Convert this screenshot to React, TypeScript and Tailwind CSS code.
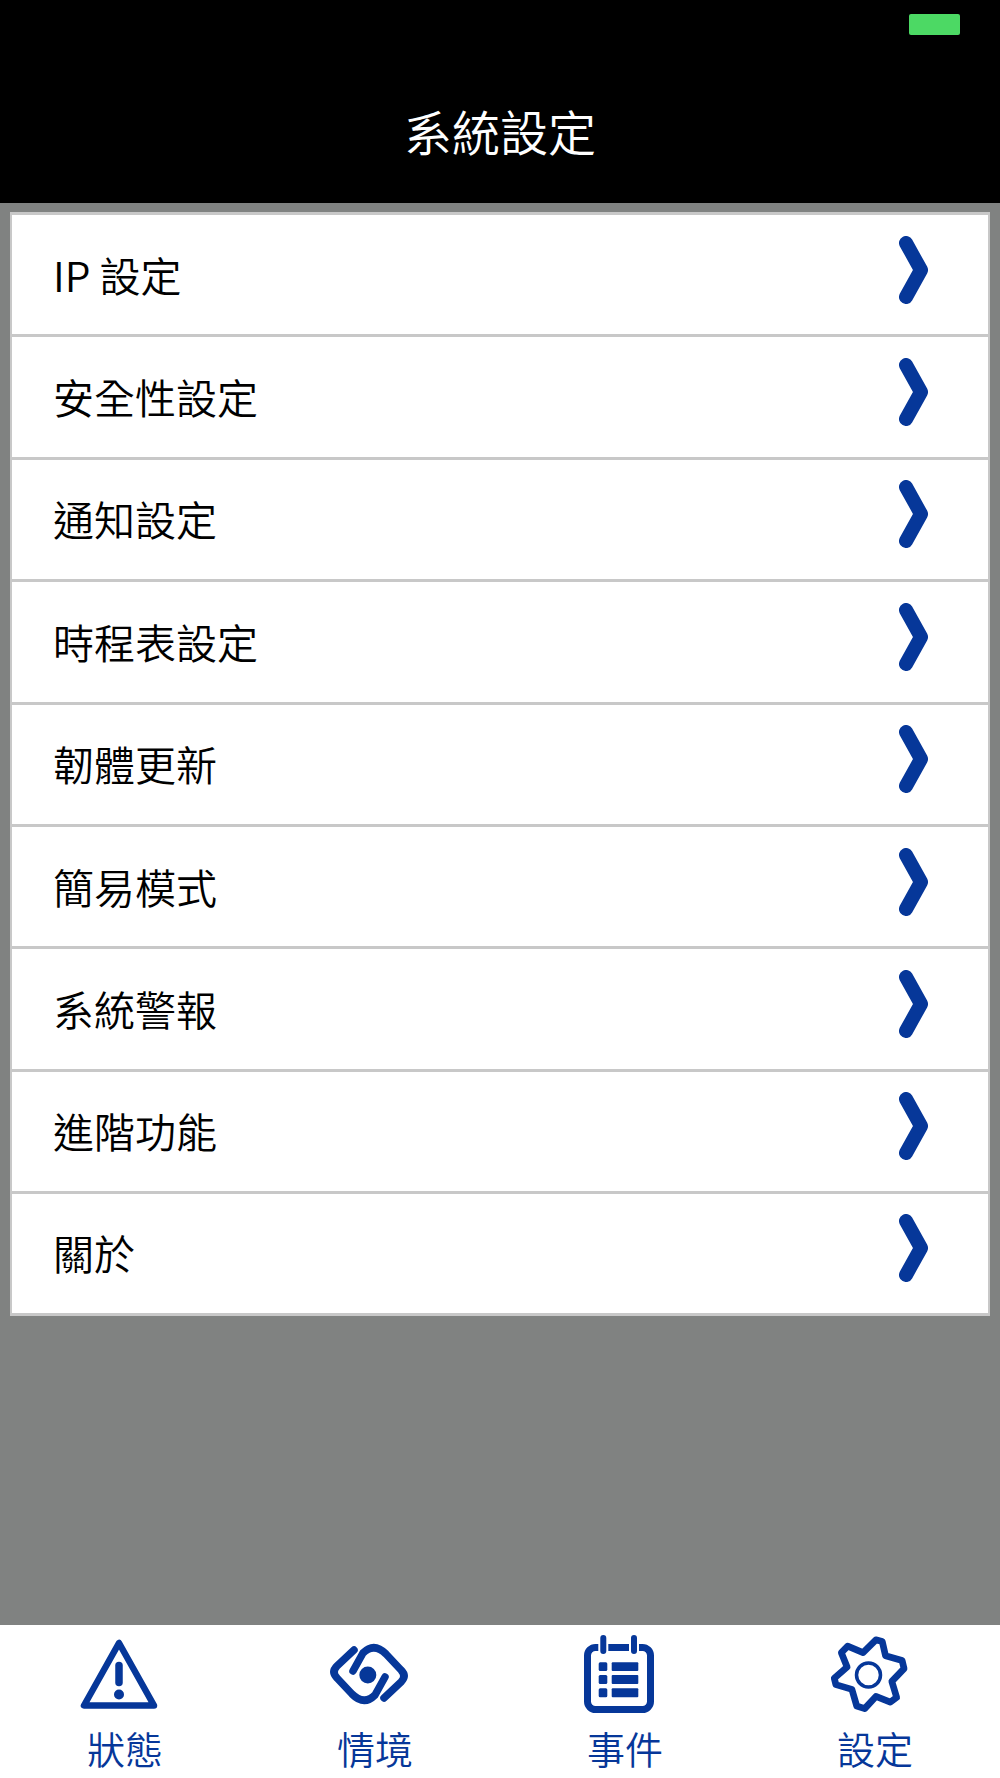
const font = { fontFamily: '"Noto Sans CJK TC", "Noto Sans CJK SC", sans-serif' };

const rows = ["IP 設定", "安全性設定", "通知設定", "時程表設定", "韌體更新", "簡易模式", "系統警報", "進階功能", "關於"];

function Chevron() {
  return (
    <svg viewBox="0 0 30 68" className="w-[30px] h-[68px] mb-[10px] shrink-0" fill="none">
      <path d="M7 7 L22 34 L7 61" stroke="#063799" strokeWidth="14" strokeLinecap="round" strokeLinejoin="round" />
    </svg>
  );
}

function Warning() {
  return (
    <svg viewBox="0 0 90 90" className="w-[90px] h-[90px] mr-3" fill="none">
      <path d="M45 13 L10 75.5 L80 75.5 Z" stroke="#063799" strokeWidth="6.5" strokeLinejoin="round" />
      <path d="M45 35.5 L45 52.5" stroke="#063799" strokeWidth="7.5" strokeLinecap="round" />
      <circle cx="45" cy="64.5" r="5" fill="#063799" />
    </svg>
  );
}

function Scene() {
  return (
    <svg viewBox="0 0 90 90" className="w-[90px] h-[90px] mr-3" fill="none" stroke="#063799" strokeWidth="7.5" strokeLinecap="round">
      <path d="M30 20 L13 36 Q7 42 13 48 L28 64 Q40 76 51 65 L61 47" />
      <path d="M60 68 L77 52 Q83 46 77 40 L62 24 Q50 12 39 23 L29 41" />
      <circle cx="43.8" cy="45" r="8.5" fill="#063799" stroke="none" />
    </svg>
  );
}

function Calendar() {
  return (
    <svg viewBox="0 0 90 90" className="w-[90px] h-[90px] mr-3" fill="none">
      <rect x="13.5" y="17.5" width="63" height="62" rx="8" stroke="#063799" strokeWidth="7" />
      <path d="M29.3 8 L29.3 21 M60 8 L60 21" stroke="#ffffff" strokeWidth="10" />
      <path d="M29.3 8 L29.3 21 M60 8 L60 21" stroke="#063799" strokeWidth="6" strokeLinecap="round" />
      <g fill="#063799">
        <rect x="24.7" y="32.3" width="8.6" height="8.7" rx="1.5" />
        <rect x="37.7" y="32.3" width="26.6" height="8.7" rx="1" />
        <rect x="24.7" y="45" width="8.6" height="9" rx="1.5" />
        <rect x="37.7" y="45" width="26.6" height="9" rx="1" />
        <rect x="24.7" y="58.3" width="8.6" height="9" rx="1.5" />
        <rect x="37.7" y="58.3" width="26.6" height="9" rx="1" />
      </g>
    </svg>
  );
}

function Gear() {
  return (
    <svg viewBox="0 0 90 90" className="w-[90px] h-[90px] mr-3" fill="none" stroke="#063799">
      <path
        transform="translate(1.8 1.8) scale(0.96)"
        d="M52.2 8.3 L58.8 10 L62.2 25 L79.5 30 L81.5 38.3 L68.8 51.7 L73.8 68.3 L67.2 73.3 L52.2 67.3 L40.5 80 L32.2 77.3 L27.2 60 L10.5 55 L8.8 48.3 L22.2 36.7 L16.2 21.7 L22.8 15 L38.8 21.7 Z"
        strokeWidth="7"
        strokeLinejoin="round"
      />
      <circle cx="44.5" cy="45" r="12" strokeWidth="3.5" />
    </svg>
  );
}

const tabs = [
  { label: "狀態", icon: <Warning /> },
  { label: "情境", icon: <Scene /> },
  { label: "事件", icon: <Calendar /> },
  { label: "設定", icon: <Gear /> },
];

export default function App() {
  return (
    <div className="w-[1000px] h-[1778px] flex flex-col bg-[#808281] overflow-hidden" style={font}>
      <header className="h-[203px] bg-black shrink-0 relative flex items-center justify-center">
        <div className="absolute top-[14px] left-[909px] w-[51px] h-[21px] rounded-[2px] bg-[#4cd964]" />
        <h1 className="text-[48px] leading-[60px] font-[350] text-white mt-[56px]">系統設定</h1>
      </header>
      <main className="flex-1 pt-[9px] px-[10px]">
        <ul className="bg-white border-x-2 border-y-[3px] border-[#c8c8c8]">
          {rows.map((r, i) => (
            <li
              key={r}
              className={
                i < rows.length - 1
                  ? "h-[122.4px] border-b-[3px] border-[#c8c8c8] flex items-center justify-between pl-[41px] pr-[59px]"
                  : "h-[118.4px] flex items-center justify-between pl-[41px] pr-[59px]"
              }
            >
              <span className="text-[41px] leading-[50px] font-[350] text-black mb-[2px]">{r}</span>
              <Chevron />
            </li>
          ))}
        </ul>
      </main>
      <nav className="h-[153px] bg-white shrink-0 grid grid-cols-4">
        {tabs.map((t) => (
          <div key={t.label} className="flex flex-col items-center pt-[5px]">
            {t.icon}
            <span className="text-[38px] leading-[46px] font-[350] text-[#063799] mt-[5px]">{t.label}</span>
          </div>
        ))}
      </nav>
    </div>
  );
}
